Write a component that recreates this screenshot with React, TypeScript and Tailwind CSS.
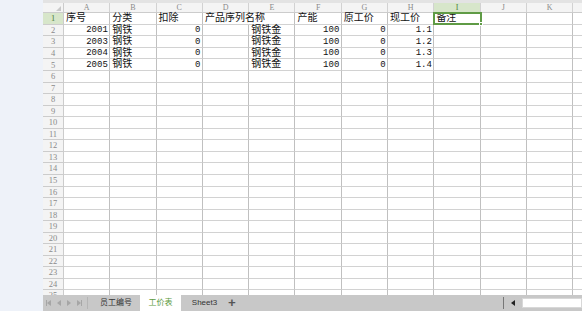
const COLS = ["A", "B", "C", "D", "E", "F", "G", "H", "I", "J", "K", ""];

type Cell = { v: string; right?: boolean; num?: boolean; spill?: boolean };

const header: Cell[] = [
  { v: "序号" },
  { v: "分类" },
  { v: "扣除" },
  { v: "产品序列名称", spill: true },
  { v: "" },
  { v: "产能" },
  { v: "原工价" },
  { v: "现工价", spill: true },
  { v: "备注" },
];

const data = [
  ["2001", "钢铁", "0", "钢铁金", "100", "0", "1.1"],
  ["2003", "钢铁", "0", "钢铁金", "100", "0", "1.2"],
  ["2004", "钢铁", "0", "钢铁金", "100", "0", "1.3"],
  ["2005", "钢铁", "0", "钢铁金", "100", "0", "1.4"],
];

function rowCells(r: number): Cell[] {
  if (r === 1) return header;
  const d = data[r - 2];
  if (!d) return [];
  return [
    { v: d[0], right: true, num: true },
    { v: d[1] },
    { v: d[2], right: true, num: true },
    { v: "" },
    { v: d[3] },
    { v: d[4], right: true, num: true },
    { v: d[5], right: true, num: true },
    { v: d[6], right: true, num: true },
  ];
}

const Tri = ({ dir }: { dir: "l" | "r" }) => (
  <svg width="4" height="6" viewBox="0 0 4 6">
    <path d={dir === "l" ? "M4 0 L0 3 L4 6 Z" : "M0 0 L4 3 L0 6 Z"} fill="currentColor" />
  </svg>
);

export default function App() {
  const rows = Array.from({ length: 25 }, (_, i) => i + 1);
  return (
    <div
      className="flex h-[311px] w-[582px] overflow-hidden bg-[#eef2f9]"
      style={{ fontFamily: '"Liberation Mono", "Noto Sans CJK SC", monospace' }}
    >
      <div className="w-[43px] shrink-0" />
      <div className="flex min-w-0 flex-1 flex-col bg-white">
        <div className="h-[3px] shrink-0 bg-[#e3e3e3]" />
        <div className="min-h-0 flex-1 overflow-hidden">
          {/* column header */}
          <div className="flex h-[10.3px] border-b border-[#cccccc] bg-[#f4f4f4]">
            <div className="relative w-[21px] shrink-0 border-r border-[#cccccc]">
              <div className="absolute bottom-[1px] right-[2px] h-0 w-0 border-b-[5px] border-l-[5px] border-b-[#c9c9c9] border-l-transparent" />
            </div>
            {COLS.map((c, i) => (
              <div
                key={i}
                className={`flex w-[46.3px] shrink-0 items-center justify-center border-r border-[#d2d2d2] text-[8px] leading-none ${
                  c === "I" ? "bg-[#d7e6ca] text-[#4f7f3a]" : "text-[#8a8a8a]"
                }`}
                style={{ fontFamily: '"Liberation Serif", serif' }}
              >
                {c}
              </div>
            ))}
          </div>
          {rows.map((r) => {
            const cells = rowCells(r);
            return (
              <div key={r} className="flex h-[11.56px]">
                <div
                  className={`flex w-[21px] shrink-0 items-center justify-center border-b border-r border-[#cccccc] text-[8.5px] leading-none ${
                    r === 1 ? "bg-[#d7e6ca] text-[#4f7f3a]" : "bg-[#f4f4f4] text-[#8a8a8a]"
                  }`}
                  style={{ fontFamily: '"Liberation Serif", serif' }}
                >
                  {r}
                </div>
                {COLS.map((c, ci) => {
                  const cell = cells[ci];
                  const sel = r === 1 && c === "I";
                  return (
                    <div
                      key={ci}
                      className={`relative flex w-[46.3px] shrink-0 items-center border-b border-[#d2d2d2] pt-[1px] leading-none text-[#111] ${
                        cell?.spill && r === 1 && c === "D" ? "" : "border-r border-r-[#c0c0c0]"
                      } ${cell?.right ? "justify-end pr-[1.5px]" : "pl-[2px]"} ${cell?.num ? "text-[9px]" : "text-[10px]"}`}
                    >
                      {cell && cell.v && <span className="relative z-10 whitespace-nowrap">{cell.v}</span>}
                      {sel && (
                        <div className="absolute -left-[1px] -top-[1.5px] z-20 h-[13px] w-[49px] border-2 border-[#5f9b45]">
                          <div className="absolute -bottom-[3px] -right-[3px] h-[4px] w-[4px] border border-white bg-[#5f9b45]" />
                        </div>
                      )}
                    </div>
                  );
                })}
              </div>
            );
          })}
        </div>
        {/* sheet tabs */}
        <div className="flex h-[16px] shrink-0 items-center bg-[#c8c8c8] text-[8px] leading-none text-[#333]">
          <div className="flex w-[44px] items-center gap-[6px] pl-[3px] text-[#a6a6a6]">
            <div className="flex items-center">
              <div className="h-[6px] w-[1px] bg-current" />
              <Tri dir="l" />
            </div>
            <Tri dir="l" />
            <Tri dir="r" />
            <div className="flex items-center">
              <Tri dir="r" />
              <div className="h-[6px] w-[1px] bg-current" />
            </div>
          </div>
          <div className="h-[12px] w-px bg-[#b5b5b5]" />
          <div className="flex w-[52px] items-center justify-center pl-[4px]">员工编号</div>
          <div className="flex h-full w-[41px] items-center justify-center bg-white text-[#5c9a3e]">工价表</div>
          <div className="flex w-[45px] items-center justify-center pl-[2px]" style={{ fontFamily: '"Liberation Sans", sans-serif' }}>
            Sheet3
          </div>
          <div className="flex w-[12px] items-center justify-center text-[13px] font-bold text-[#555]">+</div>
          <div className="flex-1" />
          <div className="h-[12px] w-px bg-[#777]" />
          <div className="flex w-[18px] items-center justify-center text-[#222]">
            <Tri dir="l" />
          </div>
          <div className="h-[10px] w-[60px] border border-[#d8d8d8] bg-white" />
        </div>
      </div>
    </div>
  );
}
